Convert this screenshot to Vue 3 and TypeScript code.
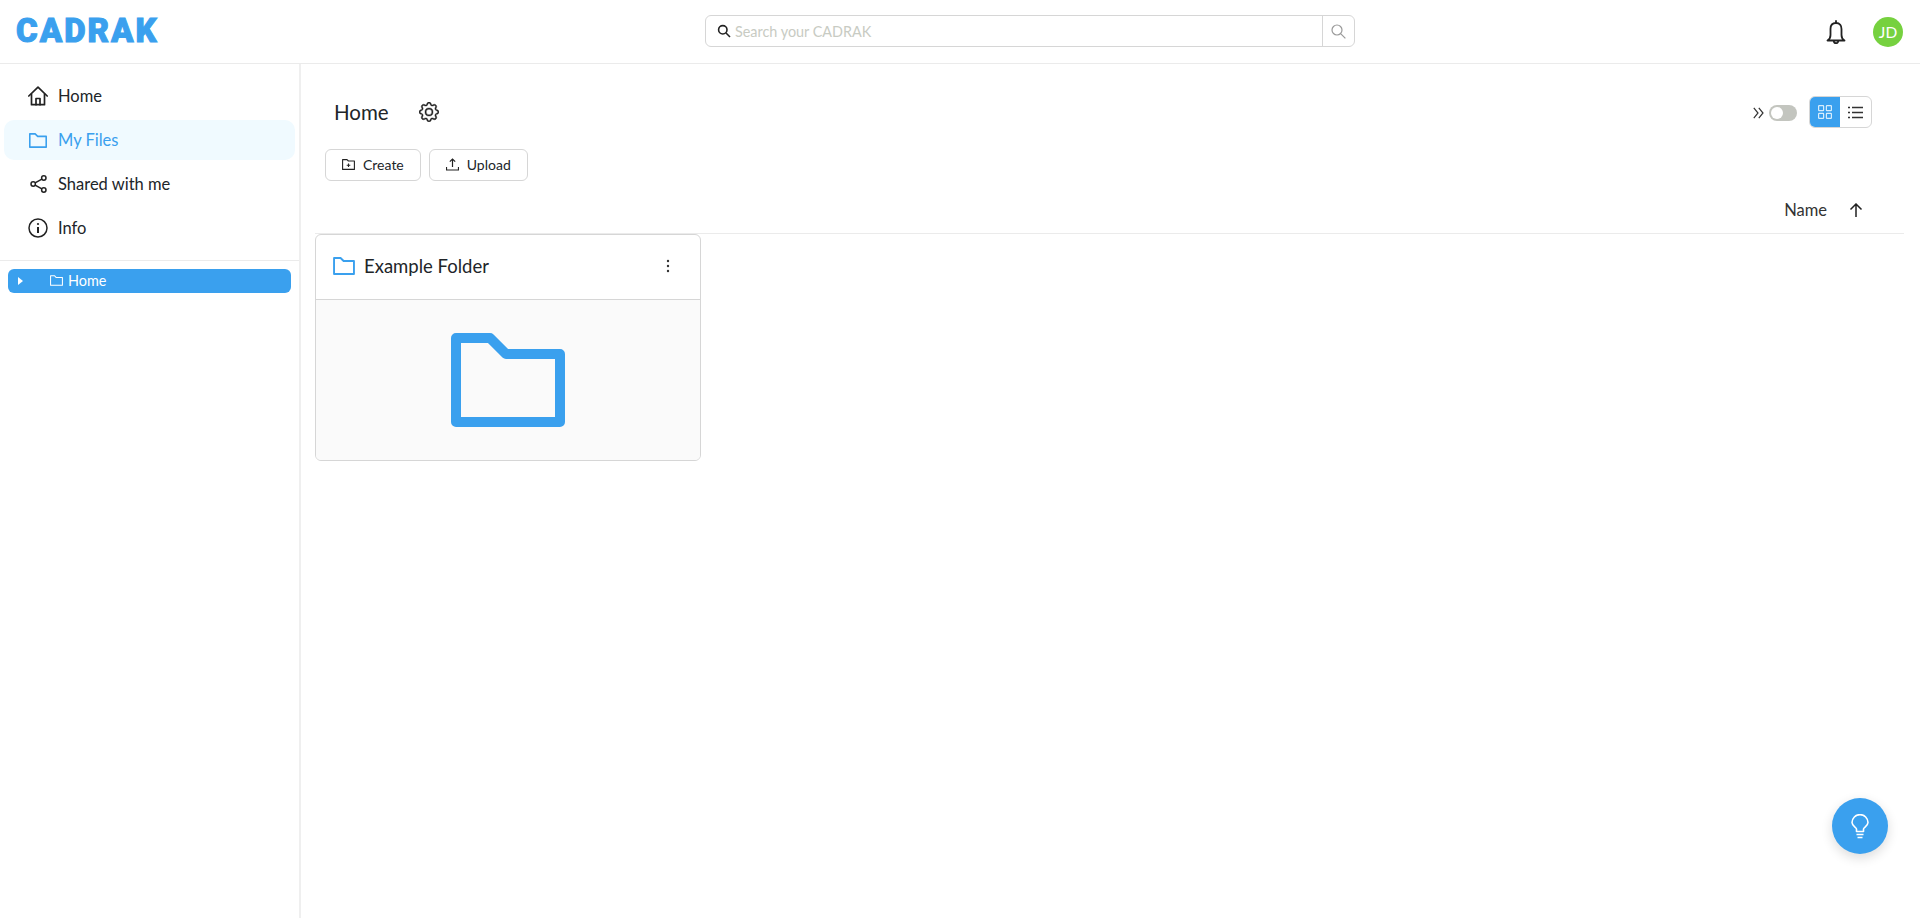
<script setup lang="ts">
interface NavItem {
  label: string
  icon: string
  active?: boolean
}
const navItems: NavItem[] = [
  { label: 'Home', icon: 'home' },
  { label: 'My Files', icon: 'folder', active: true },
  { label: 'Shared with me', icon: 'share' },
  { label: 'Info', icon: 'info' },
]
const folderPath = 'M5 5H39L55 21H109V89H5Z'
const gearA = 'M8 4.754a3.246 3.246 0 1 0 0 6.492 3.246 3.246 0 0 0 0-6.492M5.754 8a2.246 2.246 0 1 1 4.492 0 2.246 2.246 0 0 1-4.492 0'
const gearB = 'M9.796 1.343c-.527-1.79-3.065-1.79-3.592 0l-.094.319a.873.873 0 0 1-1.255.52l-.292-.16c-1.64-.892-3.433.902-2.54 2.541l.159.292a.873.873 0 0 1-.52 1.255l-.319.094c-1.79.527-1.79 3.065 0 3.592l.319.094a.873.873 0 0 1 .52 1.255l-.16.292c-.892 1.64.901 3.434 2.541 2.54l.292-.159a.873.873 0 0 1 1.255.52l.094.319c.527 1.79 3.065 1.79 3.592 0l.094-.319a.873.873 0 0 1 1.255-.52l.292.16c1.64.893 3.434-.902 2.54-2.541l-.159-.292a.873.873 0 0 1 .52-1.255l.319-.094c1.79-.527 1.79-3.065 0-3.592l-.319-.094a.873.873 0 0 1-.52-1.255l.16-.292c.893-1.64-.902-3.433-2.541-2.54l-.292.159a.873.873 0 0 1-1.255-.52zm-2.633.283c.246-.835 1.428-.835 1.674 0l.094.319a1.873 1.873 0 0 0 2.693 1.115l.291-.16c.764-.415 1.6.42 1.184 1.185l-.159.292a1.873 1.873 0 0 0 1.116 2.692l.318.094c.835.246.835 1.428 0 1.674l-.319.094a1.873 1.873 0 0 0-1.115 2.693l.16.291c.415.764-.42 1.6-1.185 1.184l-.291-.159a1.873 1.873 0 0 0-2.693 1.116l-.094.318c-.246.835-1.428.835-1.674 0l-.094-.319a1.873 1.873 0 0 0-2.692-1.115l-.292.16c-.764.415-1.6-.42-1.184-1.185l.159-.291A1.873 1.873 0 0 0 1.945 8.93l-.319-.094c-.835-.246-.835-1.428 0-1.674l.319-.094A1.873 1.873 0 0 0 3.06 4.377l-.16-.292c-.415-.764.42-1.6 1.185-1.184l.292.159a1.873 1.873 0 0 0 2.692-1.115z'
</script>

<template>
  <div class="app">
    <header class="topbar">
      <div class="logo">CADRAK</div>
      <div class="search">
        <div class="search-input">
          <svg class="search-icon" width="14" height="14" viewBox="0 0 14 14" fill="none" stroke="#222" stroke-width="1.6">
            <circle cx="5.8" cy="5.8" r="4.2" />
            <path d="M9 9l4 4" />
          </svg>
          <span class="placeholder">Search your CADRAK</span>
        </div>
        <div class="search-btn">
          <svg width="15" height="15" viewBox="0 0 15 15" fill="none" stroke="#9a9a9a" stroke-width="1.2">
            <circle cx="6" cy="6" r="5" />
            <path d="M9.6 9.6l4.8 4.8" />
          </svg>
        </div>
      </div>
      <div class="top-right">
        <svg width="20" height="26" viewBox="0 0 20 26" fill="none" stroke="#222" stroke-width="1.8" stroke-linejoin="round">
          <path d="M10 4C6 4 4.5 7 4.5 10V16C4.5 18.5 3.4 20.4 1.5 21.5H18.5C16.6 20.4 15.5 18.5 15.5 16V10C15.5 7 14 4 10 4Z" />
          <path d="M10 1.2V4" />
          <path d="M7.8 22a2.2 2.2 0 0 0 4.4 0" />
        </svg>
        <div class="avatar">JD</div>
      </div>
    </header>

    <div class="body">
      <aside class="sidebar">
        <nav class="nav">
          <a v-for="item in navItems" :key="item.label" class="nav-item" :class="{ active: item.active }">
            <span class="nav-icon">
              <svg v-if="item.icon === 'home'" width="20" height="20" viewBox="0 0 20 20" fill="none" stroke="#222" stroke-width="1.7" stroke-linejoin="round" stroke-linecap="round">
                <path d="M.8 10L10 1.2L19.2 10" />
                <path d="M3.5 8V18.7H16.5V8" />
                <path d="M8 18.7V12.5H12V18.7" />
              </svg>
              <svg v-else-if="item.icon === 'folder'" width="18" height="15" viewBox="0 0 114 94" fill="none" stroke="#3aa0ee" stroke-width="10" stroke-linejoin="round">
                <path :d="folderPath" />
              </svg>
              <svg v-else-if="item.icon === 'share'" width="17" height="18" viewBox="0 0 17 18" fill="none" stroke="#222" stroke-width="1.5">
                <circle cx="3.2" cy="9" r="2.2" />
                <circle cx="13.8" cy="3" r="2.2" />
                <circle cx="13.8" cy="15" r="2.2" />
                <path d="M5.1 7.9L11.9 4.1M5.1 10.1L11.9 13.9" />
              </svg>
              <svg v-else width="20" height="20" viewBox="0 0 20 20" fill="none" stroke="#222" stroke-width="1.5">
                <circle cx="10" cy="10" r="9" />
                <path d="M10 9V15" stroke-width="2" />
                <circle cx="10" cy="6" r="1.1" fill="#222" stroke="none" />
              </svg>
            </span>
            <span>{{ item.label }}</span>
          </a>
        </nav>
        <div class="tree">
          <div class="tree-row">
            <svg class="tree-caret" width="5" height="8" viewBox="0 0 5 8" fill="#fff"><path d="M0 0L5 4L0 8Z" /></svg>
            <svg class="tree-folder" width="13" height="11" viewBox="0 0 114 94" fill="none" stroke="#fff" stroke-width="9" stroke-linejoin="round">
              <path :d="folderPath" />
            </svg>
            <span>Home</span>
          </div>
        </div>
      </aside>

      <main class="main">
        <div class="title-row">
          <div class="title-left">
            <h1 class="title">Home</h1>
            <svg width="20" height="20" viewBox="0 0 16 16" fill="#222" stroke="#222" stroke-width=".3">
              <path :d="gearA" />
              <path :d="gearB" />
            </svg>
          </div>
          <div class="title-right">
            <svg class="chevrons" width="11" height="12" viewBox="0 0 11 12" fill="none" stroke="#333" stroke-width="1.2">
              <path d="M.8 .8L5 6L.8 11.2M5.8 .8L10 6L5.8 11.2" />
            </svg>
            <div class="toggle"><span class="knob"></span></div>
            <div class="view-switch">
              <div class="view-btn on">
                <svg width="14" height="14" viewBox="0 0 14 14" fill="none" stroke="#d6ecfc" stroke-width="1.2">
                  <rect x=".6" y=".6" width="5" height="5" rx=".6" />
                  <rect x="8.4" y=".6" width="5" height="5" rx=".6" />
                  <rect x=".6" y="8.4" width="5" height="5" rx=".6" />
                  <rect x="8.4" y="8.4" width="5" height="5" rx=".6" />
                </svg>
              </div>
              <div class="view-btn">
                <svg width="15" height="13" viewBox="0 0 15 13" fill="none" stroke="#333" stroke-width="1.3">
                  <path d="M4 1.5H15M4 6.5H15M4 11.5H15" />
                  <path d="M0 1.5H2M0 6.5H2M0 11.5H2" />
                </svg>
              </div>
            </div>
          </div>
        </div>

        <div class="actions">
          <button class="btn">
            <svg width="13" height="11" viewBox="0 0 13 11" fill="none" stroke="#222" stroke-width="1.1" stroke-linejoin="round">
              <path d="M.6 .6H5L6.4 2H12.4V10.4H.6Z" />
              <path d="M6.5 4.4V8M4.7 6.2H8.3" />
            </svg>
            Create
          </button>
          <button class="btn">
            <svg width="13" height="13" viewBox="0 0 13 13" fill="none" stroke="#222" stroke-width="1.2">
              <path d="M6.5 9V1M3.8 3.6L6.5 1L9.2 3.6" />
              <path d="M.5 9V12H12.5V9" />
            </svg>
            Upload
          </button>
        </div>

        <div class="sort-row">
          <span class="sort-name">Name</span>
          <svg width="14" height="14" viewBox="0 0 14 14" fill="none" stroke="#222" stroke-width="1.5">
            <path d="M7 14V1M1.5 6.5L7 1L12.5 6.5" />
          </svg>
        </div>

        <div class="card">
          <div class="card-head">
            <svg width="22" height="18" viewBox="0 0 114 94" fill="none" stroke="#3aa0ee" stroke-width="10" stroke-linejoin="round">
              <path :d="folderPath" />
            </svg>
            <span class="card-name">Example Folder</span>
            <svg class="dots" width="4" height="14" viewBox="0 0 4 14" fill="#333">
              <circle cx="2" cy="2" r="1.2" />
              <circle cx="2" cy="7" r="1.2" />
              <circle cx="2" cy="12" r="1.2" />
            </svg>
          </div>
          <div class="card-body">
            <svg width="114" height="94" viewBox="0 0 114 94" fill="none" stroke="#3aa0ee" stroke-width="10" stroke-linejoin="round">
              <path :d="folderPath" />
            </svg>
          </div>
        </div>
      </main>
    </div>

    <div class="fab">
      <svg width="18" height="25" viewBox="0 0 18 25" fill="none" stroke="#fff" stroke-width="1.6" stroke-linejoin="round">
        <path d="M5.5 17.5V15C5.5 13.5 1 12 1 8.6A8 8 0 0 1 17 8.6C17 12 12.5 13.5 12.5 15V17.5Z" />
        <path d="M5.5 20.5H12.5M6.5 23.5H11.5" />
      </svg>
    </div>
  </div>
</template>

<style>
html, body { margin: 0; background: #fff; }
</style>

<style scoped>
.app {
  height: 918px;
  display: flex;
  flex-direction: column;
  font-family: "Lato", "Noto Sans", sans-serif;
  color: #212529;
  overflow: hidden;
  position: relative;
}
.topbar {
  height: 63px;
  box-sizing: content-box;
  border-bottom: 1px solid #ebebeb;
  display: flex;
  align-items: center;
  padding: 0 17px 0 16px;
  flex: none;
}
.logo {
  width: 689px;
  font-family: "Roboto", sans-serif;
  font-weight: 900;
  font-size: 33px;
  letter-spacing: 2px;
  color: #3aa0ee;
  line-height: 1;
  -webkit-text-stroke: 1px #3aa0ee;
  margin-bottom: 2px;
}
.search {
  width: 650px;
  height: 32px;
  box-sizing: border-box;
  border: 1px solid #d6d6d6;
  border-radius: 6px;
  display: flex;
  margin-bottom: 1px;
}
.search-input {
  flex: 1;
  display: flex;
  align-items: center;
  gap: 4px;
  padding-left: 11px;
}
.placeholder { font-size: 14.4px; color: #c8cbc3; }
.search-btn {
  width: 31px;
  border-left: 1px solid #d6d6d6;
  display: flex;
  align-items: center;
  justify-content: center;
}
.top-right {
  margin-left: auto;
  display: flex;
  align-items: center;
  gap: 27px;
}
.avatar {
  width: 30px;
  height: 30px;
  border-radius: 50%;
  background: #76d13f;
  color: #fff;
  font-size: 15.5px;
  display: flex;
  align-items: center;
  justify-content: center;
}
.body { flex: 1; display: flex; min-height: 0; }
.sidebar {
  width: 299px;
  border-right: 2px solid #efefef;
  flex: none;
}
.nav {
  padding: 12px 4px 0;
  border-bottom: 1px solid #ebebeb;
  display: flex;
  flex-direction: column;
  gap: 4px;
  height: 197px;
  box-sizing: border-box;
}
.nav-item {
  height: 40px;
  display: flex;
  align-items: center;
  gap: 10px;
  padding-left: 24px;
  border-radius: 10px;
  font-size: 16.5px;
  color: #212529;
}
.nav-item.active { background: #f0faff; color: #3aa0ee; }
.nav-icon {
  width: 20px;
  height: 20px;
  display: flex;
  align-items: center;
  justify-content: center;
}
.tree { padding: 8px; }
.tree-row {
  height: 24px;
  box-sizing: border-box;
  padding: 0 0 1px 10px;
  border-radius: 6px;
  background: #3aa0ee;
  color: #fff;
  font-size: 14.4px;
  display: flex;
  align-items: center;
}
.tree-caret { margin-right: 27px; }
.tree-folder { margin-right: 5px; }
.main { flex: 1; min-width: 0; padding: 0 16px 0 14px; }
.title-row {
  height: 85px;
  display: flex;
  align-items: center;
  justify-content: space-between;
  padding: 11px 32px 0 19px;
  box-sizing: border-box;
}
.title-left { display: flex; align-items: center; gap: 30px; }
.title { margin: 0; font-size: 20.5px; font-weight: 400; color: #212529; }
.title-right { display: flex; align-items: center; }
.chevrons { margin-top: 1px; }
.toggle {
  width: 28px;
  height: 16px;
  margin: 1px 12px 0 5px;
  border-radius: 8px;
  background: #c3c5bf;
  display: flex;
  align-items: center;
  padding-left: 2px;
  box-sizing: border-box;
}
.knob { width: 12px; height: 12px; border-radius: 50%; background: #fff; }
.view-switch {
  display: flex;
  width: 63px;
  height: 32px;
  box-sizing: border-box;
  border: 1px solid #d6d6d6;
  border-radius: 6px;
  overflow: hidden;
}
.view-btn { flex: 1; display: flex; align-items: center; justify-content: center; }
.view-btn.on { background: #3aa0ee; margin: -1px 0 -1px -1px; }
.actions { display: flex; gap: 8px; padding-left: 10px; }
.btn {
  height: 32px;
  box-sizing: border-box;
  padding: 0 16px 2px;
  border: 1px solid #d6d6d6;
  border-radius: 6px;
  background: #fff;
  display: flex;
  align-items: center;
  gap: 8px;
  font-family: inherit;
  font-size: 14px;
  color: #212529;
}
.sort-row {
  margin-top: 9px;
  height: 40px;
  padding: 0 41px 3px 0;
  border-bottom: 1px solid #ebebeb;
  display: flex;
  align-items: center;
  justify-content: flex-end;
  gap: 22px;
}
.sort-name { font-size: 16.5px; font-weight: 400; color: #333; }
.card {
  width: 386px;
  height: 227px;
  box-sizing: border-box;
  border: 1px solid #d6d6d6;
  border-radius: 6px;
  overflow: hidden;
  display: flex;
  flex-direction: column;
  background: #fff;
}
.card-head {
  height: 65px;
  flex: none;
  border-bottom: 1px solid #d6d6d6;
  display: flex;
  align-items: center;
  padding: 0 30px 3px 17px;
  gap: 9px;
  box-sizing: border-box;
}
.card-name { font-size: 18.5px; flex: 1; color: #212529; }
.card-body {
  flex: 1;
  background: #fafafa;
  display: flex;
  align-items: center;
  justify-content: center;
}
.fab {
  position: absolute;
  left: 1832px;
  top: 798px;
  width: 56px;
  height: 56px;
  border-radius: 50%;
  background: #3aa0ee;
  box-shadow: 0 4px 12px rgba(0, 0, 0, 0.14);
  display: flex;
  align-items: center;
  justify-content: center;
}
</style>
